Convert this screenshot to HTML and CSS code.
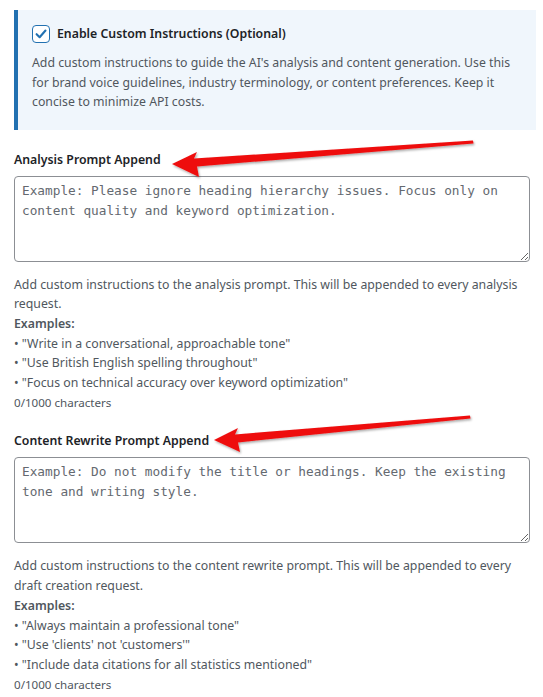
FILE: index.html
```html
<!DOCTYPE html>
<html lang="en">
<head>
<meta charset="utf-8">
<title>Custom Instructions</title>
<link rel="stylesheet" href="styles.css">
</head>
<body>
<div class="page">
  <div class="notice">
    <label class="toggle">
      <span class="checkbox">
        <svg viewBox="0 0 20 20" width="16" height="16"><path d="M4.5 10.2 L8.3 14 L15.6 5.6" fill="none" stroke="#2271b1" stroke-width="2.6" stroke-linecap="round" stroke-linejoin="round"/></svg>
      </span>
      <span class="toggle-text">Enable Custom Instructions (Optional)</span>
    </label>
    <p class="notice-desc">Add custom instructions to guide the AI's analysis and content generation. Use this for brand voice guidelines, industry terminology, or content preferences. Keep it concise to minimize API costs.</p>
  </div>

  <div class="field">
    <label class="field-label">Analysis Prompt Append</label>
    <textarea class="field-input" placeholder="Example: Please ignore heading hierarchy issues. Focus only on content quality and keyword optimization."></textarea>
    <p class="field-desc">Add custom instructions to the analysis prompt. This will be appended to every analysis request.<br><strong>Examples:</strong><br>• "Write in a conversational, approachable tone"<br>• "Use British English spelling throughout"<br>• "Focus on technical accuracy over keyword optimization"</p>
    <p class="counter">0/1000 characters</p>
  </div>

  <div class="field">
    <label class="field-label">Content Rewrite Prompt Append</label>
    <textarea class="field-input" placeholder="Example: Do not modify the title or headings. Keep the existing tone and writing style."></textarea>
    <p class="field-desc">Add custom instructions to the content rewrite prompt. This will be appended to every draft creation request.<br><strong>Examples:</strong><br>• "Always maintain a professional tone"<br>• "Use 'clients' not 'customers'"<br>• "Include data citations for all statistics mentioned"</p>
    <p class="counter">0/1000 characters</p>
  </div>

  <svg class="arrows" width="543" height="697" viewBox="0 0 543 697">
    <defs>
      <filter id="sh" x="-10%" y="-50%" width="120%" height="200%">
        <feDropShadow dx="1" dy="1.5" stdDeviation="1" flood-color="#000" flood-opacity="0.35"/>
      </filter>
    </defs>
    <polygon filter="url(#sh)" fill="#ee1111" points="172,164 197,152 194,158.5 473,140.5 473.5,143.5 197,166.5 199,177"/>
    <polygon filter="url(#sh)" fill="#ee1111" points="214,440 238,428 235,434.5 470,415.5 470.5,418.5 238,442.5 240,452"/>
  </svg>
</div>
</body>
</html>
```

FILE: styles.css
```css
* { box-sizing: border-box; }

html, body {
  margin: 0;
  padding: 0;
  background: #ffffff;
}

body {
  font-family: "Noto Sans", "Open Sans", sans-serif;
  font-size: 12.3px;
  line-height: 19.5px;
  color: #1d2327;
}

.page {
  position: relative;
  width: 543px;
  padding: 10px 7px 0 14px;
}

.notice {
  background: #f0f6fc;
  border-left: 4px solid #2271b1;
  padding: 14px 14px 18px 14px;
  margin-bottom: 20px;
}

.toggle {
  display: flex;
  align-items: center;
  gap: 7px;
  height: 20px;
}

.checkbox {
  width: 18px;
  height: 18px;
  border: 1.5px solid #2271b1;
  border-radius: 4px;
  background: #fff;
  display: flex;
  align-items: center;
  justify-content: center;
  flex: none;
}

.toggle-text {
  font-weight: 600;
  color: #1d2327;
}

.notice-desc {
  margin: 9px 0 0 0;
  color: #50575e;
}

.field {
  width: 516px;
  margin-bottom: 19px;
}

.field-label {
  display: block;
  font-weight: 600;
  line-height: 20px;
  color: #1d2327;
}

.field-input {
  display: block;
  width: 516px;
  height: 86px;
  margin: 6px 0 13px 0;
  padding: 4px 7px;
  border: 1px solid #8c8f94;
  border-radius: 4px;
  font-family: "DejaVu Sans Mono", "Liberation Mono", monospace;
  font-size: 12.75px;
  line-height: 20px;
  color: #2c3338;
  background: #fff;
  resize: vertical;
}

.field-input::placeholder {
  color: #646970;
  opacity: 1;
}

.field-desc {
  margin: 3px 0 0 0;
  color: #50575e;
  line-height: 19.7px;
}

.field-desc strong {
  font-weight: 600;
}

.counter {
  margin: 0;
  font-size: 11.6px;
  line-height: 19.7px;
  color: #50575e;
}

.arrows {
  position: absolute;
  left: 0;
  top: 0;
  pointer-events: none;
}
```
